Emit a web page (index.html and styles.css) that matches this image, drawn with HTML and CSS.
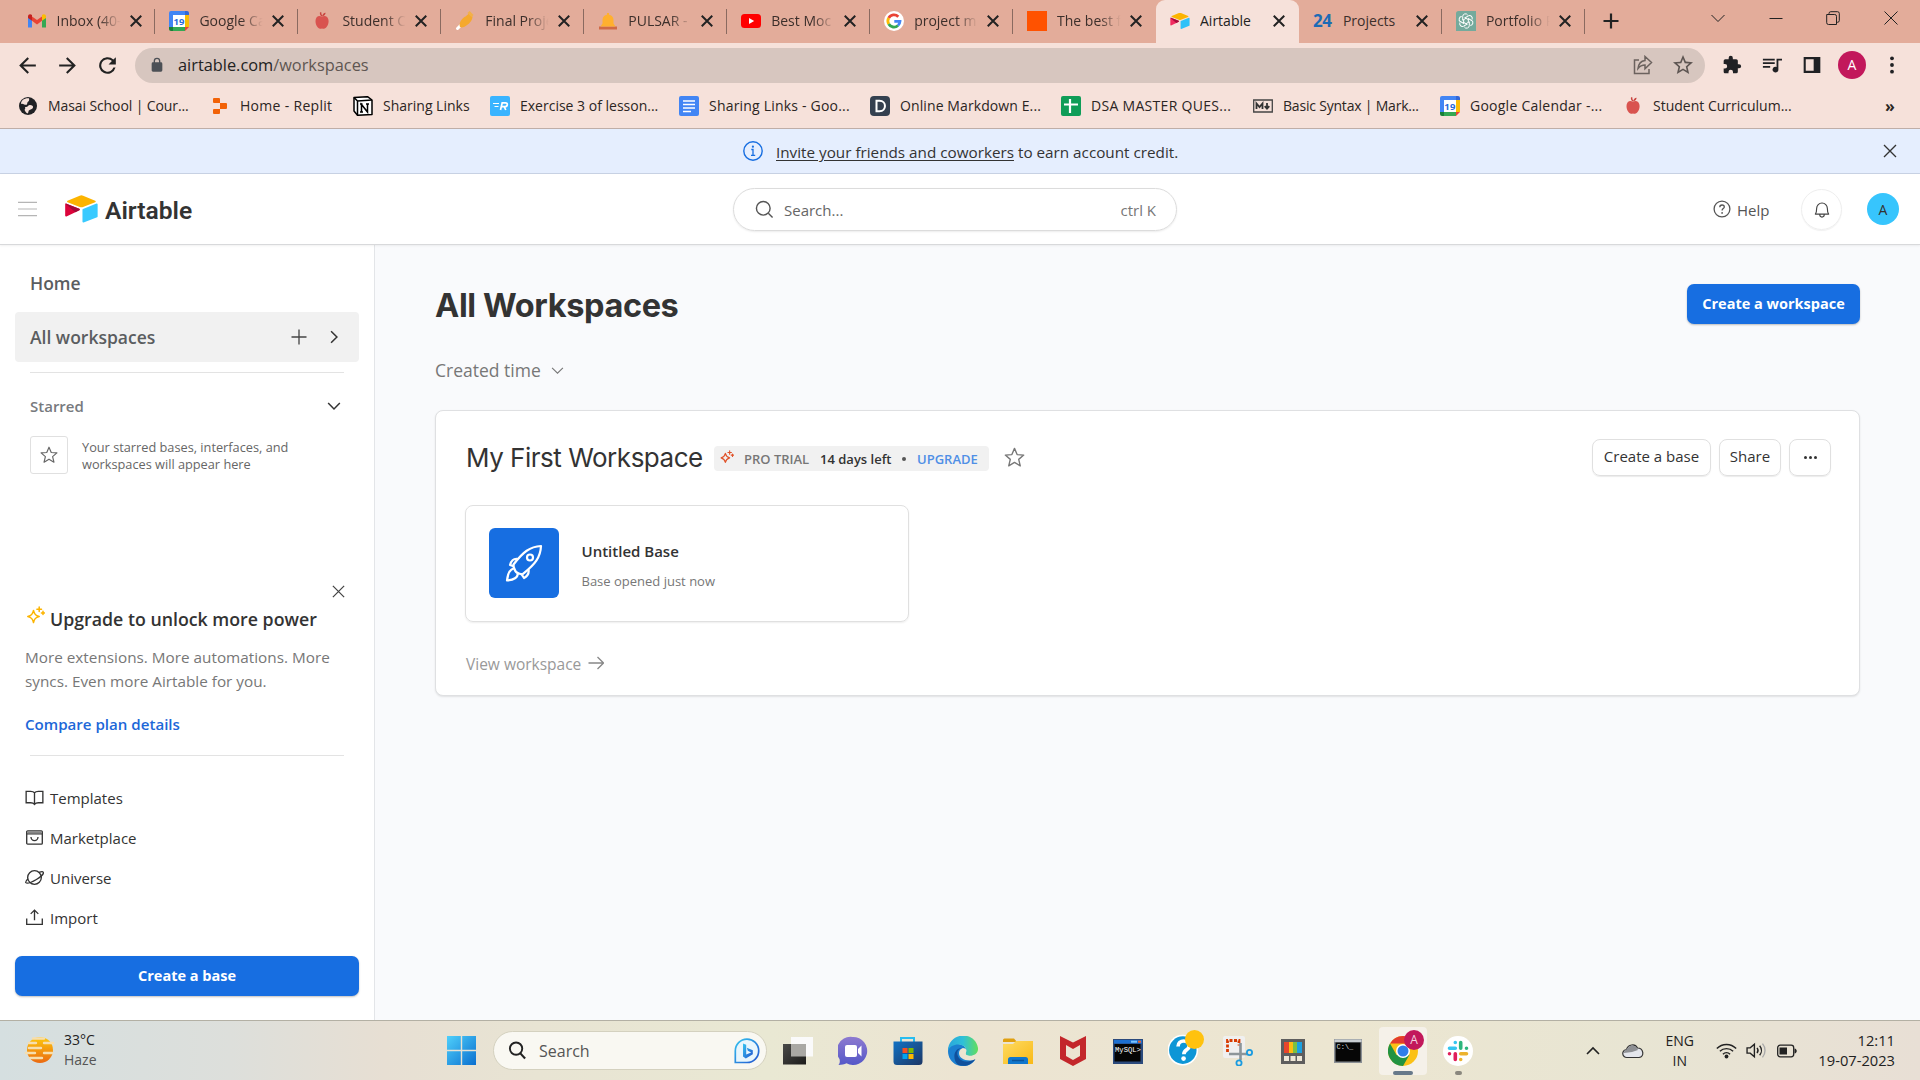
FILE: index.html
```html
<!DOCTYPE html>
<html lang="en">
<head>
<meta charset="utf-8">
<title>Airtable</title>
<link rel="stylesheet" href="styles.css">
</head>
<body>
<svg class="defs" aria-hidden="true">
  <defs>
    <linearGradient id="g-win" x1="0" y1="0" x2="1" y2="1"><stop offset="0" stop-color="#4fd0fb"/><stop offset="1" stop-color="#0a6fcf"/></linearGradient>
    <linearGradient id="g-sun" x1="0" y1="0" x2="0" y2="1"><stop offset="0" stop-color="#fdc70c"/><stop offset="1" stop-color="#ea6a12"/></linearGradient>
    <linearGradient id="g-bing" x1="0" y1="0" x2="1" y2="1"><stop offset="0" stop-color="#35c4f0"/><stop offset="1" stop-color="#2254cf"/></linearGradient>
    <linearGradient id="g-chat" x1="0" y1="0" x2="0" y2="1"><stop offset="0" stop-color="#8d7ad0"/><stop offset="1" stop-color="#5558c8"/></linearGradient>
    <linearGradient id="g-store" x1="0" y1="0" x2="1" y2="1"><stop offset="0" stop-color="#1172c4"/><stop offset="1" stop-color="#1d3765"/></linearGradient>
    <linearGradient id="g-edge" x1="0" y1="0" x2="1" y2="0"><stop offset="0" stop-color="#2aa6dc"/><stop offset=".5" stop-color="#2fc0d8"/><stop offset="1" stop-color="#62de5c"/></linearGradient>
    <linearGradient id="g-folder" x1="0" y1="0" x2="1" y2="1"><stop offset="0" stop-color="#fedb62"/><stop offset="1" stop-color="#f9b916"/></linearGradient>
    <linearGradient id="g-dark" x1="0" y1="0" x2="1" y2="1"><stop offset="0" stop-color="#4a4a48"/><stop offset="1" stop-color="#1c1c1b"/></linearGradient>
  </defs>
  <symbol id="i-x" viewBox="0 0 12 12"><path d="M1.5 1.5l9 9m0-9l-9 9" fill="none" stroke="currentColor"/></symbol>
  <symbol id="i-cal" viewBox="0 0 20 20"><path fill="#fff" d="M4 4h12v12H4z"/><path fill="#4285f4" d="M0 2a2 2 0 0 1 2-2h16v4H4v12H0z"/><path fill="#3367d6" d="M16 0h2a2 2 0 0 1 2 2v2h-4z"/><path fill="#fbbc04" d="M16 4h4v12h-4z"/><path fill="#34a853" d="M4 16h12v4H4z"/><path fill="#188038" d="M0 16h4v4H2a2 2 0 0 1-2-2z"/><path fill="#ea4335" d="M16 16h4l-4 4z"/><text x="10" y="13.600" text-anchor="middle" class="cal-num">19</text></symbol>
  <symbol id="i-apple" viewBox="0 0 20 20"><path fill="#d9534f" d="M9.800 5.600c-3-1.700-6.300 0-6.300 4.500 0 4 2.400 7.700 4.600 7.700.8 0 1.300-.4 1.900-.4s1.100.4 1.900.4c2.300 0 4.700-3.700 4.700-7.700 0-4.500-3.500-6.200-6.800-4.500z"/><path fill="#c9443f" d="M9.600 5.300C8.600 4.900 7.600 3 7.900 1.400l1.300-.5c.2 1.600.4 2.900 1.200 3.900C10.500 3 12 1.600 13.600 1.700c0 1.800-1.400 3.600-4 3.600z"/></symbol>
  <symbol id="i-at" viewBox="8 8 184 154"><path fill="#fcb400" d="M90 12.400 24 39.700c-3.600 1.500-3.600 6.700.1 8.200l66.300 26.200a25 25 0 0 0 18.100 0l66.200-26.200c3.700-1.500 3.800-6.700.1-8.200L108.800 12.400a25 25 0 0 0-18.800 0"/><path fill="#2fc1f8" d="M105.300 88.500v65.600c0 3.100 3.200 5.200 6.100 4.100l73.800-28.700c1.700-.6 2.800-2.300 2.800-4.100V59.800c0-3.100-3.200-5.200-6.100-4.100l-73.800 28.700c-1.700.6-2.800 2.300-2.800 4.100"/><path fill="#f02b60" d="M88 91.800 66.200 102.400 17.700 125.700c-2.900 1.400-6.700-.8-6.700-4V60c0-2.500 3.400-5.200 6.600-4l70.100 27.800c3.600 1.400 3.800 6.400.3 8"/><path fill="#a70b3c" d="m88 91.800-21.800 10.600L12.500 57.100c1-.9 3-1.800 5.100-1.100l70.100 27.800c3.600 1.400 3.800 6.400.3 8"/></symbol>
  <symbol id="i-star" viewBox="0 0 20 20"><path d="M10 1.300l2.500 5.900 6.300.5-4.800 4.100 1.500 6.200-5.500-3.400L4.500 18 6 11.800 1.200 7.700l6.300-.5z" fill="none" stroke="currentColor" stroke-width="1.300" stroke-linejoin="round"/></symbol>
  <symbol id="i-down" viewBox="0 0 12 12"><path d="M1 3.500l5 5 5-5" fill="none" stroke="currentColor"/></symbol>
  <symbol id="i-spark" viewBox="0 0 20 20"><path d="M8.500 4.500c.8 3.800 2 5 5.700 6-3.700 1-4.900 2.200-5.700 6-.8-3.800-2-5-5.700-6 3.700-1 4.900-2.200 5.700-6zM14.200 1v4.600M11.900 3.300h4.600M18 5.300v3.200M16.400 6.900h3.200" fill="none" stroke="currentColor" stroke-width="1.500" stroke-linejoin="round" stroke-linecap="round"/></symbol>
</svg>

<header class="browser">
  <div class="tabstrip">
    <div class="tab"><svg class="fav" viewBox="0 0 20 20"><path fill="#4285f4" d="M1 5v11.500h4V8z"/><path fill="#34a853" d="M15 16.500h4V5l-4 3z"/><path fill="#ea4335" d="M5 9.800V5.500L10 9l5-3.500v4.300l-5 3.700z"/><path fill="#c5221f" d="M1 5.500C1 3 3.500 2.600 5 4v5.800L1 7z"/><path fill="#fbbc04" d="M19 5.500C19 3 16.500 2.600 15 4v5.800L19 7z"/></svg><span class="tab-title">Inbox (40-</span><svg class="tab-x"><use href="#i-x"/></svg></div>
    <div class="tab"><svg class="fav"><use href="#i-cal"/></svg><span class="tab-title">Google Ca</span><svg class="tab-x"><use href="#i-x"/></svg></div>
    <div class="tab"><svg class="fav"><use href="#i-apple"/></svg><span class="tab-title">Student C</span><svg class="tab-x"><use href="#i-x"/></svg></div>
    <div class="tab"><svg class="fav" viewBox="0 0 20 20"><path d="M2.500 17.500l4-4" stroke="#fff" stroke-width="3" stroke-linecap="round"/><path fill="#f5a92e" d="M5 16c-1.500-4 1.500-8.500 5.500-10.500L14 2.500l3.500 3C17.500 9.500 14 13.500 9 16c-1.500.6-3 .5-4 0z"/><path d="M13.500 1l4 4" stroke="#f2b04a" stroke-width="3"/></svg><span class="tab-title">Final Proje</span><svg class="tab-x"><use href="#i-x"/></svg></div>
    <div class="tab"><svg class="fav" viewBox="0 0 20 20"><path fill="#d06a45" d="M1 15.500h18v3H1z"/><path fill="#ffb02e" d="M2.500 15.500l2-3V9a5.500 5.500 0 0 1 11 0v3.500l2 3zM9 2h2v3H9z"/></svg><span class="tab-title">PULSAR -</span><svg class="tab-x"><use href="#i-x"/></svg></div>
    <div class="tab"><svg class="fav" viewBox="0 0 20 20"><rect y="3" width="20" height="14" rx="3.500" fill="#f00"/><path fill="#fff" d="M8 7l5.200 3L8 13z"/></svg><span class="tab-title">Best Moc</span><svg class="tab-x"><use href="#i-x"/></svg></div>
    <div class="tab"><svg class="fav" viewBox="0 0 20 20"><circle cx="10" cy="10" r="10" fill="#fff"/><g fill="none" stroke-width="2.800"><path stroke="#ea4335" d="M4.700 7a6 6 0 0 1 9.600-1.200"/><path stroke="#fbbc05" d="M4.700 13a6 6 0 0 1 0-6"/><path stroke="#34a853" d="M14 14.500A6 6 0 0 1 4.700 13"/><path stroke="#4285f4" d="M10.300 10.300H16a6 6 0 0 1-2 4.200"/></g></svg><span class="tab-title">project m</span><svg class="tab-x"><use href="#i-x"/></svg></div>
    <div class="tab"><svg class="fav" viewBox="0 0 20 20"><path fill="#ff5200" d="M0 0h20v20H0z"/></svg><span class="tab-title">The best f</span><svg class="tab-x"><use href="#i-x"/></svg></div>
    <div class="tab active"><svg class="fav"><use href="#i-at"/></svg><span class="tab-title">Airtable</span><svg class="tab-x"><use href="#i-x"/></svg></div>
    <div class="tab"><span class="fav fav-24">24</span><span class="tab-title">Projects</span><svg class="tab-x"><use href="#i-x"/></svg></div>
    <div class="tab"><svg class="fav" viewBox="0 0 20 20"><path fill="#74aa9c" d="M2.500 0H20v20H0V2.500A2.500 2.500 0 0 1 2.500 0z"/><g fill="none" stroke="#fff" stroke-width="1"><path id="knot" d="M10 7.300L6.700 9.200V5.400a2.700 2.700 0 0 1 5-1.300"/><use href="#knot" transform="rotate(60 10 10)"/><use href="#knot" transform="rotate(120 10 10)"/><use href="#knot" transform="rotate(180 10 10)"/><use href="#knot" transform="rotate(240 10 10)"/><use href="#knot" transform="rotate(300 10 10)"/></g></svg><span class="tab-title">Portfolio P</span><svg class="tab-x"><use href="#i-x"/></svg></div>
    <svg class="new-tab" viewBox="0 0 16 16"><path d="M8 .5v15M.5 8h15" stroke="#222" stroke-width="2.200"/></svg>
    <div class="win-ctl">
      <svg viewBox="0 0 14 14"><path d="M.5 4L7 10.500 13.500 4"/></svg>
      <svg viewBox="0 0 14 14"><path d="M.5 7.500h13"/></svg>
      <svg viewBox="0 0 14 14"><path d="M.7 3.500h8a1.800 1.800 0 0 1 1.800 1.800v8.200H2.500a1.800 1.800 0 0 1-1.800-1.800zM3 3.300V2.500A1.800 1.800 0 0 1 4.800.7h6.700a1.800 1.800 0 0 1 1.800 1.800V9.500a1.800 1.800 0 0 1-1.800 1.800h-.8"/></svg>
      <svg viewBox="0 0 14 14"><path d="M.5.5l13 13m0-13l-13 13"/></svg>
    </div>
  </div>
  <div class="toolbar">
    <svg class="nav" viewBox="0 0 24 24"><path d="M20 11H7.830l5.590-5.590L12 4l-8 8 8 8 1.410-1.410L7.830 13H20z"/></svg>
    <svg class="nav flip" viewBox="0 0 24 24"><path d="M20 11H7.830l5.590-5.590L12 4l-8 8 8 8 1.410-1.410L7.830 13H20z"/></svg>
    <svg class="nav" viewBox="0 0 24 24"><path d="M17.650 6.350A8 8 0 1 0 19.730 14h-2.080A6 6 0 1 1 12 6c1.660 0 3.140.69 4.220 1.780L13 11h7V4z"/></svg>
    <div class="urlbar">
      <svg class="lock" viewBox="0 0 24 24"><path fill="#4c5056" d="M18 8h-1V6A5 5 0 0 0 7 6v2H6a2 2 0 0 0-2 2v10c0 1.100.9 2 2 2h12a2 2 0 0 0 2-2V10a2 2 0 0 0-2-2zM9 6a3 3 0 0 1 6 0v2H9z"/></svg>
      <span class="url">airtable.com<span class="path">/workspaces</span></span>
      <svg class="u-icon share-i" viewBox="0 0 20 20"><path d="M6 5H1.500v13.500H16V14M12 1.500v4C8 6 5.500 9 5 13.500c2-2.500 4-3.400 7-3.400v3.700L18.500 7.500z" fill="none" stroke="#6b625e" stroke-width="1.500"/></svg>
      <svg class="u-icon" viewBox="2 2 20 20"><path fill="#5d5552" d="M22 9.240l-7.190-.62L12 2 9.190 8.630 2 9.240l5.460 4.730L5.820 21 12 17.270 18.180 21l-1.630-7.030zM12 15.400l-3.760 2.270 1-4.280-3.320-2.880 4.380-.38L12 6.100l1.710 4.040 4.380.38-3.320 2.880 1 4.280z"/></svg>
    </div>
    <div class="ext">
      <svg viewBox="0 0 24 24"><path d="M20.500 11H19V7a2 2 0 0 0-2-2h-4V3.500a2.500 2.500 0 0 0-5 0V5H4a2 2 0 0 0-2 2v3.800h1.500a2.700 2.700 0 0 1 0 5.400H2V20c0 1.100.9 2 2 2h3.800v-1.500a2.700 2.700 0 0 1 5.400 0V22H17a2 2 0 0 0 2-2v-4h1.500a2.500 2.500 0 0 0 0-5z"/></svg>
      <svg viewBox="1 1 22 22"><path d="M15 5H2v2h13zm0 4H2v2h13zM2 15h8v-2H2zM17 5v9.180A3.200 3.200 0 1 0 19 17V7h4V5z"/></svg>
      <svg viewBox="0 0 24 24"><path d="M2 2.500h20v19H2zM4.500 5v14H14V5z" fill-rule="evenodd"/></svg>
      <span class="profile">A</span>
      <svg viewBox="0 0 24 24"><circle cx="12" cy="4" r="2.300"/><circle cx="12" cy="12" r="2.300"/><circle cx="12" cy="20" r="2.300"/></svg>
    </div>
  </div>
  <div class="bookmarks">
    <span class="bm"><svg viewBox="0 0 20 20"><circle cx="10" cy="10" r="9" fill="#202124"/><path fill="#f6e1da" d="M3 8c2-1 3 1 5 .8 2 0 .5-2 2-3 1-.6 1.500-1.800 1-3.500C6 2 3 4.500 3 8zM9.500 17.500c1.500-1 .3-2.500 2-3.500s3-1 3.500-2.500-1-2.500-3-2.500-2 2-4 2 0 1.500-1 2 .5 3.500 2.500 4.500z"/></svg>Masai School | Cour...</span>
    <span class="bm"><svg viewBox="0 0 20 20"><path fill="#f26207" d="M4 2h5a1 1 0 0 1 1 1v4H4a1 1 0 0 1-1-1V3a1 1 0 0 1 1-1zM10 7h6a1 1 0 0 1 1 1v4a1 1 0 0 1-1 1h-6zM4 13h6v4a1 1 0 0 1-1 1H4a1 1 0 0 1-1-1v-3a1 1 0 0 1 1-1z"/></svg>Home - Replit</span>
    <span class="bm"><svg viewBox="0 0 20 20"><path fill="#fff" stroke="#000" stroke-width="1.500" stroke-linejoin="round" d="M1 1.500l13.500-.8L19 4v14.500l-14.500.8L1 15z"/><path d="M1 1.500L4.500 5l14.500-1M4.500 5v14.300" stroke="#000" stroke-width="1.500" fill="none"/><path d="M8.500 16V8.500l6 7.500V8M7 8h2.500M7 16h3M13 8h3" stroke="#000" stroke-width="1.500" fill="none"/></svg>Sharing Links</span>
    <span class="bm"><svg viewBox="0 0 20 20"><rect width="20" height="20" rx="2" fill="#3ab4ff"/><path d="M3 7.500h6M4.500 10.500h4" stroke="#fff"/><path d="M10.500 14l1.700-7.200h3.200c3 0 2.300 3.900-.7 3.900h-3 2.500l1.600 3.300" fill="none" stroke="#fff" stroke-width="1.700"/></svg>Exercise 3 of lesson...</span>
    <span class="bm"><svg viewBox="0 0 20 20"><rect width="20" height="20" rx="2" fill="#4285f4"/><path d="M4 5h12M4 8.500h12M4 12h12M4 15.500h8" stroke="#fff" stroke-width="1.700"/></svg>Sharing Links - Goo...</span>
    <span class="bm"><svg viewBox="0 0 20 20"><rect width="20" height="20" rx="4" fill="#34404f"/><path d="M6.500 4.800h3c7.300 0 7.300 10.400 0 10.400h-3z" fill="none" stroke="#fff" stroke-width="2"/></svg>Online Markdown E...</span>
    <span class="bm"><svg viewBox="0 0 20 20"><rect width="20" height="20" rx="2" fill="#0f9d58"/><path d="M9 3v14M3 8.500h14" stroke="#fff" stroke-width="2.200"/></svg>DSA MASTER QUES...</span>
    <span class="bm"><svg viewBox="0 0 20 20"><path d="M.7 4h18.600v12H.7z" fill="none" stroke="#444" stroke-width="1.300"/><path d="M3.500 13V7.500L6.500 11l3-3.500V13M14 7v5M11.700 10.200l2.300 2.500 2.300-2.500" fill="none" stroke="#333" stroke-width="1.800"/></svg>Basic Syntax | Mark...</span>
    <span class="bm"><svg><use href="#i-cal"/></svg>Google Calendar -...</span>
    <span class="bm"><svg><use href="#i-apple"/></svg>Student Curriculum...</span>
    <span class="more">»</span>
  </div>
</header>

<div class="banner">
  <svg class="info" viewBox="0 0 20 20"><circle cx="10" cy="10" r="9.200" fill="none" stroke="#176ee1" stroke-width="1.400"/><path d="M8.300 8.500H10v5.500M8 14.300h4.200" fill="none" stroke="#176ee1" stroke-width="1.300"/><circle cx="9.900" cy="5.700" r="1.100" fill="#176ee1"/></svg>
  <span class="banner-text"><u>Invite your friends and coworkers</u> to earn account credit.</span>
  <svg class="banner-x"><use href="#i-x"/></svg>
</div>

<div class="appbar">
  <svg class="burger" viewBox="0 0 20 16"><path d="M0 1h20M0 8h20M0 15h20" stroke="#b5b5b5" stroke-width="1.300"/></svg>
  <svg class="logo" viewBox="10 9 180 152" preserveAspectRatio="none"><path fill="#fcb400" d="M90 12.400 24 39.700c-3.600 1.500-3.600 6.700.1 8.200l66.300 26.200a25 25 0 0 0 18.100 0l66.200-26.200c3.700-1.500 3.800-6.700.1-8.200L108.800 12.400a25 25 0 0 0-18.800 0"/><path fill="#39caff" d="M105.300 88.500v65.600c0 3.100 3.200 5.200 6.100 4.100l73.800-28.700c1.700-.6 2.800-2.300 2.800-4.100V59.800c0-3.100-3.200-5.200-6.100-4.100l-73.800 28.700c-1.700.6-2.800 2.300-2.800 4.100"/><path fill="#dc043b" d="M88 91.800 66.200 102.400 17.700 125.700c-2.900 1.400-6.700-.8-6.700-4V60c0-2.500 3.400-5.200 6.600-4l70.100 27.800c3.600 1.400 3.800 6.400.3 8"/><path fill="#a20a38" d="m88 91.800-21.800 10.600L12.500 57.100c1-.9 3-1.800 5.100-1.100l70.100 27.800c3.600 1.400 3.800 6.400.3 8"/></svg>
  <span class="wordmark">Airtable</span>
  <div class="search">
    <svg viewBox="0 0 20 20"><circle cx="8.700" cy="8.700" r="7.200" fill="none" stroke="#555" stroke-width="1.500"/><path d="M14 14l4.500 4.500" stroke="#555" stroke-width="1.500"/></svg>
    <span class="ph">Search...</span><span class="kbd">ctrl K</span>
  </div>
  <svg class="help-i" viewBox="0 0 18 18"><circle cx="9" cy="9" r="7.900" fill="none" stroke="#555" stroke-width="1.300"/><path d="M6.800 7.200c0-3 4.500-2.800 4.500-.2 0 1.600-2.200 1.600-2.200 3.400" fill="none" stroke="#555" stroke-width="1.300"/><circle cx="9.100" cy="12.900" r=".9" fill="#555"/></svg>
  <span class="help">Help</span>
  <span class="bell"><svg viewBox="0 0 18 20"><path d="M1.500 15.200c1.300-1.500 1.500-3 1.500-6.500a6 6 0 0 1 12 0c0 3.500.2 5 1.500 6.500zM6.500 15.500v.5a2.500 2.500 0 0 0 5 0v-.5" fill="none" stroke="#444" stroke-width="1.300" stroke-linejoin="round"/></svg></span>
  <span class="avatar">A</span>
</div>

<div class="app">
  <aside class="side">
    <div class="row home">Home</div>
    <div class="row sel"><span>All workspaces</span>
      <svg class="plus" viewBox="0 0 16 16"><path d="M8 .5v15M.5 8h15" stroke="#444" stroke-width="1.300"/></svg>
      <svg class="chev right"><use href="#i-down"/></svg></div>
    <hr>
    <div class="starred"><span>Starred</span><svg class="chev"><use href="#i-down"/></svg></div>
    <div class="star-row"><span class="star-box"><svg><use href="#i-star"/></svg></span><span class="star-text">Your starred bases, interfaces, and<br>workspaces will appear here</span></div>
    <div class="upsell">
      <svg class="up-x"><use href="#i-x"/></svg>
      <div class="up-title"><svg><use href="#i-spark"/></svg><span>Upgrade to unlock more power</span></div>
      <p>More extensions. More automations. More<br>syncs. Even more Airtable for you.</p>
      <span class="compare">Compare plan details</span>
    </div>
    <hr>
    <nav class="links">
      <span><svg viewBox="0 0 20 20"><path d="M10 5c-1-1.200-2-1.500-4-1.500H1.200v12H6c2 0 3 .5 4 1.800 1-1.300 2-1.800 4-1.800h4.800v-12H14c-2 0-3 .3-4 1.500zv12"/></svg>Templates</span>
      <span><svg viewBox="0 0 20 20"><rect x="1.800" y="3" width="16.400" height="14" rx="1"/><path d="M2 6.200h16M6.300 9.500a3.700 3.700 0 0 0 7.400 0"/><path d="M2.300 4.700h15.400" class="lid"/></svg>Marketplace</span>
      <span><svg viewBox="0 0 20 20"><circle cx="10" cy="10" r="7.200"/><path d="M14.800 4.700c2.500-1 4-.9 4.400-.2.800 1.500-2.800 5-7.200 7.600-4.800 2.800-10 4.600-11.100 3.300-.5-.8.400-2.200 2.300-4"/></svg>Universe</span>
      <span><svg viewBox="0 0 20 20"><path d="M1.800 11v6.300h16.400V11M10 13V2.500M6 6.200l4-4 4 4"/></svg>Import</span>
    </nav>
    <span class="btn-primary wide">Create a base</span>
  </aside>
  <main class="main">
    <div class="head"><h1>All Workspaces</h1><span class="btn-primary">Create a workspace</span></div>
    <div class="sort"><span>Created time</span><svg><use href="#i-down"/></svg></div>
    <section class="card">
      <div class="ws">
        <h2>My First Workspace</h2>
        <div class="badge"><svg><use href="#i-spark"/></svg><span class="pro">PRO TRIAL</span><span class="days">14 days left</span><i></i><span class="upg">UPGRADE</span></div>
        <svg class="ws-star"><use href="#i-star"/></svg>
        <div class="acts"><span class="btn">Create a base</span><span class="btn share">Share</span><span class="btn dots"><i></i><i></i><i></i></span></div>
      </div>
      <div class="base">
        <span class="tile"><svg viewBox="0 0 38 38"><g fill="none" stroke="#fff" stroke-width="2.200" stroke-linejoin="round"><path d="M36 2C25 2.500 18 8 8.500 20.500c-1 2 .5 2.500 1 4.500.5 2.500 2 4 4.500 4.500 2 .4 2.500 1.500 4 .3C30.500 20 35.500 13 36 2z"/><circle cx="25" cy="13.500" r="3"/><path d="M13 15c-4.500-.8-6.500 1-8 6l4.500 1.500M23.500 25.500c.8 4-1 6.500-4.500 8.500l-3-4.500M9 24.500c-4 .5-6 4-7 12 7-.5 10.500-3 11-7"/></g></svg></span>
        <div class="base-info"><b>Untitled Base</b><span>Base opened just now</span></div>
      </div>
      <div class="view"><span>View workspace</span><svg viewBox="0 0 16 14"><path d="M.5 7h14.500M9.500 1l6 6-6 6" fill="none" stroke="#888" stroke-width="1.300"/></svg></div>
    </section>
  </main>
</div>

<footer class="taskbar">
  <svg class="weather" viewBox="0 0 32 30"><circle cx="16" cy="15" r="13" fill="url(#g-sun)"/><g stroke="#f6deae" stroke-width="2.400" stroke-linecap="round"><path d="M9 3.500h11M5 8h7M20 8h9M5 13h12M2 18h9M20 18h8M6 23h12"/></g></svg>
  <div class="temp"><span>33°C</span><span class="haze">Haze</span></div>
  <svg class="win" viewBox="0 0 29 29"><path fill="url(#g-win)" d="M0 0h13.800v13.800H0zM15.200 0H29v13.800H15.200zM0 15.200h13.800V29H0zM15.200 15.200H29V29H15.200z"/></svg>
  <div class="tb-search"><svg viewBox="0 0 20 20"><circle cx="8.500" cy="8" r="6.500" fill="none" stroke="#222" stroke-width="2"/><path d="M13 13l5 5.500" stroke="#222" stroke-width="2.200"/></svg><span>Search</span>
    <svg class="bing" viewBox="0 0 26 26"><path d="M1.300 24.500V13A11.700 11.700 0 1 1 13 24.500z" fill="#e8f6fd" stroke="url(#g-bing)" stroke-width="1.700"/><path d="M9 5.500l3.200 1.300v9.700l5-2-3.400-1.800-1-3 6 2.500v4l-7 4.300L9 18.500z" fill="url(#g-bing)"/></svg></div>
  <div class="apps">
    <span><svg viewBox="0 0 30 30"><path fill="url(#g-dark)" d="M0 8h23v20.500H0z"/><path fill="#fafafa" d="M8 1h22v7H8zM23 8h7v12.500h-7z"/><path fill="#a9a8a4" d="M8 8h15v12.500H8z"/></svg></span>
    <span><svg viewBox="0 0 30 30"><path fill="url(#g-chat)" d="M15 1a14 14 0 1 1-6.500 26.300c-2 1.200-5 1.700-8 1.700 1.500-2 1.500-4 1-6A14 14 0 0 1 15 1z"/><rect x="7" y="9" width="12" height="12" rx="2" fill="#fff"/><path fill="#fff" d="M20 13l3.500-3.500v11L20 17z"/></svg></span>
    <span><svg viewBox="0 0 30 30"><path d="M8 6V2h13v4" fill="none" stroke="#28bdf0" stroke-width="2"/><path fill="url(#g-store)" d="M.5 5.500h29v20a3.500 3.500 0 0 1-3.500 3.500H4a3.500 3.500 0 0 1-3.500-3.500z"/><path fill="#f25022" d="M9.500 12h5v5h-5z"/><path fill="#7fba00" d="M15.500 12h5v5h-5z"/><path fill="#00a4ef" d="M9.500 18h5v5h-5z"/><path fill="#ffb900" d="M15.500 18h5v5h-5z"/></svg></span>
    <span><svg viewBox="0 0 30 30"><path fill="#1b7fd0" d="M0 15C0 9 5 7 10 8c5 .5 8 3 8 6-3-3-7-1-7 3 0 5 6 9 16 7-5 7-13 7-18 5C3 26.500 0 21 0 15z"/><path fill="url(#g-edge)" d="M0 15C0-4 27-6 30 12c.5 6-5 8.500-10 7.500-2.500-.7-3-1.500-2-3C21 7 3 5 0 15z"/><path fill="#10509c" d="M14 12c-5 1-6 6-3 10s8 5 16.500 1c-4.500 6.500-11 8-17 6-6-3.500-6-17 3.500-17z"/><path fill="#ece6d1" d="M14 12.500c3-1 5 1 4 3.500-1 2.500.5 3.500 3 4 3 .5 5 0 7-1-1.500 4-5 5-8.500 4-5-1-8-7-5.500-10.500z"/></svg></span>
    <span><svg viewBox="0 0 30 30"><path fill="#e0a010" d="M0 4a1.500 1.500 0 0 1 1.500-1.500H11L14 6H0z"/><path fill="url(#g-folder)" d="M0 8h10l3-3h17v23H0z"/><path fill="#1077cd" d="M5 28v-4.500A2.500 2.500 0 0 1 7.500 21h15a2.500 2.500 0 0 1 2.500 2.500V28z"/><path d="M9 24.500h12" stroke="#0a549b" stroke-width="1.500"/></svg></span>
    <span><svg viewBox="0 0 30 30"><path fill="#c3272b" d="M2 0l13 6.500L28 0v23l-13 7L2 23zM8 9v11l7 4 7-4V9l-7 4z" fill-rule="evenodd"/></svg></span>
    <span><svg viewBox="0 0 30 30"><path fill="#2b4a7c" d="M0 3h30v25H0z"/><path fill="#1c6fd0" d="M1 4h28v3.500H1z"/><path d="M18 5.700h6" stroke="#79c4ff" stroke-width="2"/><path d="M25 5.700h3" stroke="#e8622c" stroke-width="2"/><path fill="#050505" d="M1.500 8h26v17.500h-26z"/><text x="2" y="15.500" class="mysql">MySQL&gt;</text></svg></span>
    <span><svg class="hp" viewBox="0 0 34 34"><circle cx="14" cy="19" r="14.500" fill="#fff"/><circle cx="14" cy="19" r="13" fill="#0d96d6"/><path d="M9.500 15.500c0-7 10.500-6.500 10.500-.5 0 4-5 3.500-5 8" fill="none" stroke="#fff" stroke-width="3.500"/><circle cx="14.700" cy="27" r="2.200" fill="#fff"/><circle cx="25" cy="9" r="9" fill="#ffc20e"/></svg></span>
    <span><svg viewBox="0 0 30 30"><rect width="22" height="22" rx="2" fill="#f0f0f0"/><path d="M4.500 16V4.500H16v5" fill="none" stroke="#d83b01" stroke-width="2.800" stroke-dasharray="3 1.500"/><path d="M17.500 7v17M6 18h18" stroke="#8d9599" stroke-width="2.600"/><circle cx="26.500" cy="16.500" r="2.600" fill="none" stroke="#1a9be0" stroke-width="1.800"/><circle cx="16" cy="27" r="2.600" fill="none" stroke="#1a9be0" stroke-width="1.800"/></svg></span>
    <span><svg viewBox="0 0 30 30"><path fill="#5e5e5e" d="M3 3h24v25H3z"/><path fill="#e8452c" d="M6 6h5v11H6z"/><path fill="#fdbc10" d="M11 6h4v11h-4z"/><path fill="#7bc043" d="M15 6h4v11h-4z"/><path fill="#1ba1e2" d="M19 6h5v11h-5z"/><path fill="#efe8d8" d="M6 20h5v5H6zM12.500 20h5v5h-5zM19 20h5v5h-5z"/></svg></span>
    <span><svg viewBox="0 0 30 30"><path fill="#8a8f94" d="M1 3h28v24H1z"/><path fill="#c9ced2" d="M1.500 3.500h27V6h-27z"/><path fill="#060606" d="M2.500 6.500h25v19h-25z"/><text x="3.500" y="12.500" class="cmd">C:\_</text></svg></span>
    <span class="on"><svg class="chrome" viewBox="0 0 36 36"><circle cx="15" cy="21" r="15" fill="#fbc116"/><path fill="#e33b2e" d="M2 13.500A15 15 0 0 1 28 13.500H15z"/><path fill="#229342" d="M2 13.500A15 15 0 0 0 15 36l6.500-11.300L8.500 25z"/><circle cx="15" cy="21" r="7" fill="#fff"/><circle cx="15" cy="21" r="5.500" fill="#2f7de9"/><circle cx="26" cy="10" r="10" fill="#c2185b"/><text x="26" y="14.300" text-anchor="middle" class="chrome-a">A</text></svg></span>
    <span class="idle"><svg viewBox="0 0 30 30"><circle cx="15" cy="15" r="15" fill="#fff"/><g stroke-width="3.600" stroke-linecap="round"><path stroke="#36c5f0" d="M12.300 6.500v0M6.500 12.300h5.800"/><path stroke="#2eb67d" d="M17.700 6.500v5.800M23.500 12.300v0"/><path stroke="#ecb22e" d="M17.700 17.700h5.800M17.700 23.500v0"/><path stroke="#e01e5a" d="M12.300 17.700v5.800M6.500 17.700v0"/></g></svg></span>
  </div>
  <div class="tray">
    <svg class="up" viewBox="0 0 14 14"><path d="M1 10l6-6 6 6" fill="none" stroke="#222" stroke-width="1.600"/></svg>
    <svg class="cloud" viewBox="0 0 22 16"><path fill="#e4e6ec" stroke="#333" stroke-width="1.200" d="M5 14.500a4 4 0 0 1-.5-8C6 1.500 13 0 15.500 5c6 0 7.500 8.500 1.500 9.500z"/><path fill="#8e9094" d="M2 10C2 7 4 6.500 5 6.300 7 1 13 1.500 15 5.500l1 1.500-6 2z"/></svg>
    <div class="lang"><span>ENG</span><span>IN</span></div>
    <svg class="wifi" viewBox="0 0 20 16"><g fill="none" stroke="#222" stroke-width="1.400"><path d="M.8 6a13 13 0 0 1 18.400 0M3.700 8.800a9 9 0 0 1 12.600 0M6.600 11.500a5 5 0 0 1 6.800 0"/></g><circle cx="10" cy="13.700" r="1.800" fill="#222"/></svg>
    <svg class="vol" viewBox="0 0 20 16"><path d="M1 5.500h3L8 2v12l-4-3.500H1z" fill="none" stroke="#222" stroke-width="1.300"/><path d="M10.500 5.500a4 4 0 0 1 0 5M13 3.500a7 7 0 0 1 0 9" fill="none" stroke="#222" stroke-width="1.300"/><path d="M15.700 1.500a10 10 0 0 1 0 13" fill="none" stroke="#aaa" stroke-width="1.300"/></svg>
    <svg class="bat" viewBox="0 0 20 14"><rect x=".7" y="1.200" width="16" height="11.600" rx="2.500" fill="none" stroke="#222" stroke-width="1.300"/><path fill="#222" d="M2.500 3.500h7.500v7H2.500zM17.500 4.500c3 .5 3 4.500 0 5z"/></svg>
    <div class="clock"><span>12:11</span><span>19-07-2023</span></div>
  </div>
</footer>
</body>
</html>
```
FILE: styles.css
```css
* { box-sizing: border-box; }
body { margin: 0; width: 1920px; height: 1080px; overflow: hidden; display: flex; flex-direction: column; font-family: "Open Sans", "Noto Sans", sans-serif; font-size: 14px; color: #333; background: #fff; white-space: nowrap; }
svg { display: block; flex: none; }
.defs { position: absolute; width: 0; height: 0; }
.cal-num { font: 700 9.5px "Open Sans", sans-serif; fill: #2a6ad8; }

/* Browser frame */
.browser { background: #f6e1da; height: 129px; border-bottom: 1px solid #bfaea8; flex: none; }
.tabstrip { display: flex; height: 43px; background: #e3ac9a; padding-left: 12.5px; }
.tab { width: 142.95px; height: 43px; display: flex; align-items: center; padding: 0 0 2px 14px; color: #3c2f2b; background: linear-gradient(#8a6a60, #8a6a60) right 9px / 1px 25px no-repeat; flex: none; }
.tab:nth-child(8) { background: none; }
.tab.active { background: #f6e1da; border-radius: 9px 9px 0 0; color: #222; }
.fav { width: 20px; height: 20px; margin-right: 10px; flex: none; }
.fav-24 { font: 700 17px/20px "Open Sans", sans-serif; letter-spacing: -.5px; color: #1c6bb5; }
.tab-title { width: 65px; overflow: hidden; flex: none; -webkit-mask-image: linear-gradient(90deg, #000 65%, transparent 98%); mask-image: linear-gradient(90deg, #000 65%, transparent 98%); }
.active .tab-title, .tab:nth-child(10) .tab-title { -webkit-mask-image: none; mask-image: none; }
.tab-x { width: 14px; height: 14px; margin-left: 7px; color: #222; stroke-width: 1.7; }
.new-tab { width: 16px; height: 16px; margin: 13px 0 0 18.5px; }
.win-ctl { display: flex; gap: 43.5px; margin: 11px 0 0 92px; }
.win-ctl svg { width: 14px; height: 14px; fill: none; stroke: #222; }
.toolbar { display: flex; align-items: center; height: 46px; padding: 0 0 2px 15px; }
.nav { width: 25px; height: 25px; margin-right: 15px; fill: #222; }
.flip { transform: scaleX(-1); }
.urlbar { display: flex; align-items: center; width: 1570px; height: 35px; border-radius: 18px; background: #d7c6bf; padding-left: 14px; }
.lock { width: 16px; height: 16px; margin-right: 13px; }
.url { font-size: 16.35px; color: #222; }
.path { color: #5f5652; }
.share-i { margin-left: auto; margin-right: 20px; }
.u-icon { width: 20px; height: 20px; }
.u-icon:last-child { margin-right: 12px; }
.ext { display: flex; align-items: center; gap: 20px; margin-left: 17px; fill: #202124; }
.ext svg { width: 20px; height: 20px; }
.profile { width: 28px; height: 28px; margin: 0 -4px; border-radius: 50%; background: #c2185b; color: #fff; text-align: center; line-height: 28px; }
.bookmarks { display: grid; grid-template-columns: 192px 143px 137px 189px 191px 191px 192px 187px 183px 1fr 35px; padding: 0 0 0 18px; height: 33px; align-items: center; color: #2b2523; }
.bm { display: flex; align-items: center; gap: 10px; }
.bm:nth-child(1) { letter-spacing: -.1px; }
.bm:nth-child(2) { letter-spacing: .3px; }
.bm:nth-child(5) { letter-spacing: .2px; }
.bm:nth-child(6) { letter-spacing: .1px; }
.bm:nth-child(7) { letter-spacing: .3px; }
.bm:nth-child(8) { letter-spacing: -.2px; }
.bm:nth-child(9) { letter-spacing: .25px; }
.bm svg { width: 20px; height: 20px; }
.more { font-weight: 700; font-size: 16px; }

/* Invite banner */
.banner { display: flex; align-items: center; height: 45px; flex: none; background: #e5eefe; border-bottom: 1px solid #c8d2e4; padding: 0 22px 0 743px; font-size: 15.25px; color: #333; }
.banner-text { padding-top: 2px; }
.info { width: 20px; height: 20px; margin-right: 13px; }
.banner u { text-underline-offset: 2px; }
.banner-x { width: 16px; height: 16px; margin-left: auto; color: #333; }

/* App bar */
.appbar { display: flex; align-items: center; height: 71px; flex: none; border-bottom: 1px solid #d8d9db; padding: 0 21px 0 18px; font-size: 15px; box-shadow: 0 1px 2px rgba(0,0,0,.06); position: relative; }
.burger { width: 19px; height: 16px; margin-right: 28px; }
.logo { width: 33px; height: 28px; margin-right: 7px; }
.wordmark { font: 600 24.6px Roboto, sans-serif; width: 628px; color: #333; padding-top: 3px; }
.search { display: flex; align-items: center; width: 444px; height: 43px; border: 1px solid #dcdcdc; border-radius: 22px; padding: 0 20px 0 21px; box-shadow: 0 1px 2px rgba(0,0,0,.08); color: #666; }
.search svg { width: 19px; height: 19px; margin-right: 10px; }
.ph, .kbd, .help { padding-top: 1px; }
.kbd { margin-left: auto; color: #777; }
.help-i { width: 18px; height: 18px; margin: 0 6px 0 536px; }
.help { color: #555; }
.bell { width: 41px; height: 41px; margin-left: auto; border-radius: 50%; border: 1px solid #eee; box-shadow: 0 1px 1px rgba(0,0,0,.06); display: flex; align-items: center; justify-content: center; }
.bell svg { width: 16px; height: 19px; }
.avatar { width: 32px; height: 32px; margin-left: 25px; border-radius: 50%; background: #37c5fd; line-height: 33px; text-align: center; font-size: 14px; color: #333; }

/* Page body */
.app { display: flex; flex: 1; min-height: 0; background: #f9fafc; }
.side { width: 375px; background: #fff; border-right: 1px solid #e3e5e8; display: flex; flex-direction: column; padding: 13px 15px 0; flex: none; }
.row { height: 50px; padding: 0 15px; display: flex; align-items: center; font-size: 17.5px; font-weight: 600; color: #5a5d60; }
.sel { margin-top: 4px; background: #f1f1f1; border-radius: 4px; }
.plus { width: 16px; height: 16px; margin-left: auto; margin-right: 20px; }
.chev { width: 14px; height: 14px; color: #333; stroke-width: 1.3; }
.sel .chev { margin-right: 3px; }
.right { transform: rotate(-90deg); }
hr { width: 314px; height: 1px; border: 0; margin: 10px 0 0 15px; background: #e3e3e3; flex: none; }
.starred { display: flex; align-items: center; justify-content: space-between; height: 34px; padding: 0 18px 0 15px; margin-top: 16px; font-size: 15px; font-weight: 600; color: #777a7e; }
.star-row { display: flex; margin: 13px 0 0 15px; }
.star-box { width: 38px; height: 38px; border: 1px solid #e0e0e0; border-radius: 3px; padding: 9px; color: #666; }
.star-box svg { width: 18px; height: 18px; }
.star-text { margin: 3px 0 0 14px; font-size: 12.75px; line-height: 17px; color: #666; }
.upsell { margin: 110px 0 0 10px; }
.up-x { width: 15px; height: 15px; margin-left: 306px; color: #444; }
.up-title { display: flex; align-items: center; height: 26px; margin-top: 7px; font-size: 17.75px; font-weight: 600; color: #333; }
.up-title svg { width: 20px; height: 20px; margin: -6px 5px 0 0; color: #fcb400; }
.upsell p { margin: 13px 0 0; font-size: 15.3px; line-height: 24px; color: #777; }
.compare { display: block; margin-top: 21px; font-size: 15.1px; line-height: 20px; font-weight: 600; color: #1d67d8; }
.upsell + hr { margin-top: 21px; }
.links { display: flex; flex-direction: column; margin: 22px 0 0 10px; font-size: 15px; }
.links span { display: flex; align-items: center; height: 40px; }
.links svg { width: 19px; height: 19px; margin-right: 6px; margin-top: -2px; fill: none; stroke: #333; stroke-width: 1.4; }
.links .lid { stroke: #888; stroke-width: 2; }
.btn-primary { height: 40px; line-height: 39px; border-radius: 7px; background: #176ee1; color: #fff; text-align: center; font-weight: 700; font-size: 14.5px; box-shadow: 0 1px 2px rgba(0,0,0,.25); flex: none; }
.wide { margin-top: 18px; }
.main { flex: 1; padding: 39px 60px 0; }
.head { display: flex; justify-content: space-between; align-items: flex-start; height: 72px; }
.head .btn-primary { width: 173px; }
h1 { margin: 0; font: 700 32.5px/44px Inter, sans-serif; letter-spacing: -.38px; color: #333; }
.sort { display: flex; align-items: center; height: 28px; font-size: 17.5px; color: #777; }
.sort svg { width: 13px; height: 13px; margin-left: 10px; }
.card { margin-top: 26px; height: 286px; background: #fff; border: 1px solid #dfe0e2; border-radius: 8px; box-shadow: 0 1px 2px rgba(0,0,0,.1); padding: 22px 28px 0 30px; }
.ws { display: flex; align-items: center; height: 48px; }
h2 { margin: 1px 0 0; font: 400 26px/32px Inter, sans-serif; letter-spacing: -.48px; width: 248px; color: #333; }
.badge { display: flex; align-items: center; width: 275px; height: 25px; background: #f1f1f1; border-radius: 4px; padding-left: 5px; font-size: 13px; margin-top: 3px; flex: none; }
.badge svg { width: 15px; height: 15px; color: #e0532a; margin: -3px 10px 0 0; }
.pro { width: 76px; color: #777; font-weight: 600; }
.days { width: 82px; color: #333; font-weight: 600; }
.badge i { width: 4px; height: 4px; border-radius: 50%; background: #555; margin-right: 11px; }
.upg { color: #4f8fe6; font-weight: 600; }
.ws-star { width: 21px; height: 21px; margin-left: 15px; color: #777; }
.acts { display: flex; gap: 8px; margin-left: auto; }
.btn { width: 119px; height: 37px; border: 1px solid #e0e0e0; border-radius: 8px; text-align: center; line-height: 33px; font-size: 15px; box-shadow: 0 1px 1px rgba(0,0,0,.08); }
.share { width: 62px; }
.dots { width: 42px; display: flex; gap: 2px; align-items: center; justify-content: center; }
.dots i { width: 3px; height: 3px; border-radius: 50%; background: #333; }
.base { display: flex; align-items: center; width: 444px; height: 117px; margin: 24px 0 0 -1px; border: 1px solid #e0e0e0; border-radius: 8px; padding: 0 23px; box-shadow: 0 1px 2px rgba(0,0,0,.07); }
.tile { width: 70px; height: 70px; margin-top: -1px; border-radius: 6px; background: #176ee1; display: flex; align-items: center; justify-content: center; }
.tile svg { width: 38px; height: 38px; }
.base-info { margin: 4px 0 0 22.5px; display: flex; flex-direction: column; gap: 10px; }
.base-info b { font-size: 15px; line-height: 20px; font-weight: 600; }
.base-info span { font-size: 13px; line-height: 20px; color: #777; }
.view { display: flex; align-items: center; margin-top: 31px; height: 22px; font-size: 15.5px; color: #999; }
.view svg { width: 16px; height: 14px; margin: -2px 0 0 7px; }

/* Taskbar */
.taskbar { display: flex; height: 60px; flex: none; border-top: 1px solid #b3b0a4; background: linear-gradient(90deg, #d5dfe0 0%, #dddfdb 12%, #e7dfd3 20%, #e8e4d3 28%, #e9e8d3 40%, #ece4d2 50%, #ece6d1 70%, #e8e5d3 85%, #e8dfd5 100%); color: #222; align-items: center; }
.weather { width: 32px; height: 30px; margin: -2px 0 0 24px; }
.temp { display: flex; flex-direction: column; width: 383px; margin: -2px 0 0 8px; line-height: 20px; }
.haze { color: #555; }
.win { width: 29px; height: 29px; }
.tb-search { display: flex; align-items: center; width: 274px; height: 39px; margin-left: 17px; border-radius: 20px; background: #f9f8f2; border: 1px solid #d4d1bf; padding: 0 6px 0 14px; font-size: 16px; color: #555; }
.tb-search svg { width: 19px; height: 19px; margin-right: 12px; }
.tb-search .bing { width: 26px; height: 26px; margin: 0 0 0 auto; }
.apps { display: flex; margin-left: 7px; gap: 7px; }
.apps span { width: 48px; height: 48px; display: flex; align-items: center; justify-content: center; border-radius: 4px; position: relative; }
.apps svg { width: 30px; height: 30px; }
.apps .hp { width: 36px; height: 36px; margin: -6px -5px 0 0; }
.apps .chrome { width: 36px; height: 36px; margin: -6px -6px 0 0; }
.on { background: #f5f1e9; }
.on::after, .idle::after { content: ""; position: absolute; bottom: 0; left: 14px; width: 20px; height: 4px; border-radius: 2px; background: #67798a; }
.idle::after { left: 21px; width: 7px; background: #8a877e; }
.mysql { font: 7.2px "Liberation Mono", monospace; fill: #fff; }
.cmd { font: 7px "Liberation Mono", monospace; fill: #ddd; }
.chrome-a { font: 12px "Open Sans", sans-serif; fill: #f3d4e0; }
.tray { display: flex; align-items: center; flex: 1; padding-right: 25px; justify-content: flex-end; }
.up { width: 14px; height: 14px; margin-right: 22px; }
.cloud { width: 22px; height: 16px; margin-right: 22px; }
.lang { display: flex; flex-direction: column; align-items: center; line-height: 20px; margin-right: 22px; }
.wifi { width: 21px; height: 17px; margin-right: 9px; }
.vol { width: 21px; height: 17px; margin-right: 10px; }
.bat { width: 20px; height: 14px; }
.clock { display: flex; flex-direction: column; align-items: flex-end; width: 98px; margin-top: -2px; line-height: 20px; font-size: 14.7px; }
```
